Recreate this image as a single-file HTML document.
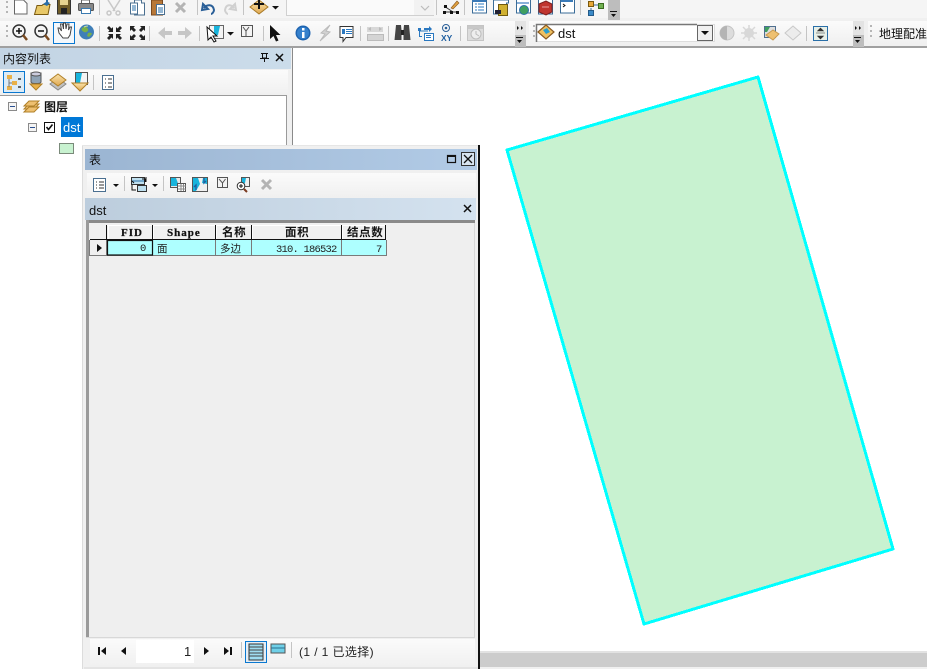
<!DOCTYPE html>
<html><head><meta charset="utf-8"><style>
html,body{margin:0;padding:0;background:#f0f0f0;width:927px;height:669px;overflow:hidden}
svg{display:block}
text{font-family:"Liberation Sans","Noto Sans CJK SC",sans-serif}
.m{font-family:"Liberation Serif","Noto Serif CJK SC",serif;font-size:11px;font-weight:bold;fill:#111;stroke:#111;stroke-width:.25;letter-spacing:1px}
.z{font-family:"Noto Sans CJK SC",sans-serif;font-size:11.500px;font-weight:bold;fill:#111;letter-spacing:.6px}
.c{font-family:"Liberation Mono","Noto Sans CJK SC",monospace;font-size:10.500px;fill:#222}
</style></head><body>
<svg width="927" height="669" viewBox="0 0 927 669" xmlns="http://www.w3.org/2000/svg">
<defs>
<linearGradient id="cap1" x1="0" x2="1"><stop offset="0" stop-color="#c3d4e4"/><stop offset="1" stop-color="#cbdcea"/></linearGradient>
<linearGradient id="cap2" x1="0" x2="1"><stop offset="0" stop-color="#9bb5d2"/><stop offset="1" stop-color="#b2cbe6"/></linearGradient>
<linearGradient id="cap3" x1="0" x2="1"><stop offset="0" stop-color="#bccddd"/><stop offset="1" stop-color="#d4e2ef"/></linearGradient>
<linearGradient id="tb" x1="0" x2="0" y1="0" y2="1"><stop offset="0" stop-color="#fbfbfb"/><stop offset="1" stop-color="#f0f0f0"/></linearGradient>
<linearGradient id="dia" x1="0" x2="0" y1="0" y2="1"><stop offset="0" stop-color="#fae3ab"/><stop offset="1" stop-color="#dfa850"/></linearGradient>
</defs>
<rect width="927" height="669" fill="#f0f0f0"/>
<!-- toolbar bands -->
<rect x="0" y="0" width="927" height="18" fill="#f5f5f5"/>
<rect x="0" y="21" width="515" height="23" fill="url(#tb)"/>
<rect x="529" y="21" width="330" height="23" fill="url(#tb)"/>
<rect x="868" y="21" width="59" height="23" fill="url(#tb)"/>
<rect x="0" y="46" width="927" height="2" fill="#a0a0a0"/>
<!-- grips -->
<g fill="#b5b5b5">
<rect x="6" y="1" width="2" height="2"/><rect x="6" y="6" width="2" height="2"/><rect x="6" y="11" width="2" height="2"/>
<rect x="6" y="25" width="2" height="2"/><rect x="6" y="30" width="2" height="2"/><rect x="6" y="35" width="2" height="2"/>
<rect x="533" y="25" width="2" height="2"/><rect x="533" y="30" width="2" height="2"/><rect x="533" y="35" width="2" height="2"/>
<rect x="870" y="25" width="2" height="2"/><rect x="870" y="30" width="2" height="2"/><rect x="870" y="35" width="2" height="2"/>
</g>
<!-- overflow chevrons -->
<g>
<rect x="608" y="0" width="12" height="20" fill="#bdbdbd"/><path d="M610 11h7v1h-7zM611 14h5l-2.500 3z" fill="#111"/>
<rect x="515" y="21" width="11" height="26" fill="#e3e3e3"/><rect x="515" y="35" width="11" height="12" fill="#bdbdbd"/><path d="M517 26l2 2-2 2zM521 26l2 2-2 2zM516 37h7v1h-7zM517 40h5l-2.500 3z" fill="#111"/>
<rect x="853" y="21" width="11" height="26" fill="#e3e3e3"/><rect x="853" y="35" width="11" height="12" fill="#bdbdbd"/><path d="M855 26l2 2-2 2zM859 26l2 2-2 2zM854 37h7v1h-7zM855 40h5l-2.500 3z" fill="#111"/>
</g>
<!-- separators -->
<g fill="#c4c4c4">
<rect x="99" y="0" width="1" height="15"/><rect x="197" y="0" width="1" height="15"/><rect x="243" y="0" width="1" height="15"/><rect x="436" y="0" width="1" height="15"/><rect x="464" y="0" width="1" height="15"/><rect x="580" y="0" width="1" height="15"/>
<rect x="99" y="26" width="1" height="15"/><rect x="149" y="26" width="1" height="15"/><rect x="199" y="26" width="1" height="15"/><rect x="263" y="26" width="1" height="15"/><rect x="360" y="26" width="1" height="15"/><rect x="388" y="26" width="1" height="15"/><rect x="460" y="26" width="1" height="15"/><rect x="806" y="26" width="1" height="15"/>
</g>
<!-- row 1 icons -->
<path d="M14.500 0h9l3.500 3.500V14H14.500z" fill="#fff" stroke="#666"/>
<path d="M34.500 14.500l2.500-9h5l1-1h7l-2 10z" fill="#e8c868" stroke="#7a5a10"/><path d="M43 4l3-2v-2h2v2l2 1-3 3z" fill="#2a6fa8"/>
<rect x="57.500" y="-1" width="13" height="15" fill="#6f5c28" stroke="#333"/><rect x="60" y="0" width="8" height="5" fill="#e6d390"/><rect x="61" y="8" width="6" height="6" fill="#222"/>
<path d="M81.500 0h8v4h-8z" fill="#fff" stroke="#666"/><rect x="78.500" y="3.500" width="15" height="7" rx="1" fill="#888" stroke="#555"/><rect x="81.500" y="8.500" width="9" height="5" fill="#fff" stroke="#3a7ab0"/>
<g stroke="#c8c8c8" stroke-width="1.500" fill="none"><path d="M108 0l7 11M120 0l-7 11"/><circle cx="109" cy="13" r="2"/><circle cx="118" cy="13" r="2"/></g>
<path d="M134.500 0h7v3h3v12h-10z" fill="#fff" stroke="#4a6f90"/><path d="M130.500 3h7v11h-7z" fill="#fff" stroke="#4a6f90"/><path d="M132 6h4M132 8h4M132 10h4" stroke="#2a6fa8"/>
<rect x="151.500" y="0" width="11" height="15" fill="#b87838" stroke="#7a4a20"/><path d="M156.500 4.500h8v10h-8z" fill="#fff" stroke="#4a6f90"/><path d="M158 8h5M158 10h5M158 12h5" stroke="#2a6fa8"/>
<path d="M176 3l9 9M185 3l-9 9" stroke="#b4b4b4" stroke-width="3"/>
<path d="M203 4l-1 6 6-1zM204 8c3-4 9-4 10 2 0 2-2 4-3 4" fill="none" stroke="#2a5f98" stroke-width="2"/>
<path d="M235 4l1 6-6-1zM234 8c-3-4-8-4-9 2 0 2 2 4 3 4" fill="none" stroke="#d0d0d0" stroke-width="2"/>
<path d="M250 7l9-7 9 7-9 7z" fill="url(#dia)" stroke="#a87a28"/><path d="M259 0v9M254 4h10" stroke="#111" stroke-width="2"/>
<path d="M272 6h7l-3.500 3.500z" fill="#111"/>
<path d="M286.500 0v15.500H434" fill="none" stroke="#d0d0d0"/><rect x="287" y="0" width="127" height="15" fill="#fafafa"/><rect x="414" y="0" width="20" height="15" fill="#f2f2f2"/><path d="M421 6l4 4 4-4" fill="none" stroke="#bdbdbd" stroke-width="1.200"/>
<path d="M444 12h14M444 6l9 6" stroke="#333" fill="none"/><path d="M444 5h3v3h-3zM443 11h3v3h-3zM450 11h3v3h-3zM456 11h3v3h-3z" fill="#111"/><path d="M451 8l6-7 2 2-6 6z" fill="#e0a040" stroke="#8a5a20" stroke-width=".6"/>
<rect x="472.500" y="-1" width="14" height="14" fill="#fff" stroke="#3a6c98"/><rect x="472" y="0" width="14" height="2" fill="#3a7ab8"/><path d="M475 4h2M478 4h6M475 7h2M478 7h6M475 10h2M478 10h6" stroke="#2a78c0"/>
<path d="M493.500 0h15v3h-2v11h-13z" fill="#fff" stroke="#3a6c98"/><path d="M498.500 4.500h9v11h-9z" fill="#d0b030" stroke="#6f5a10"/><rect x="495" y="10" width="6" height="4" fill="#223"/>
<rect x="516.500" y="-1" width="14" height="14" fill="#fff" stroke="#3a6c98"/><rect x="517" y="2" width="12" height="2" fill="#8ab0d8"/><circle cx="524" cy="10" r="4.500" fill="#3f9f60" stroke="#2a6fa8"/>
<rect x="538.500" y="-1" width="14" height="15" fill="#fff" stroke="#3a6c98"/><path d="M539 4l7-3 6 3v8l-6 3-7-3z" fill="#c0352f" stroke="#7a1f1f"/><path d="M542 7h7" stroke="#e8a0a0"/>
<rect x="560.500" y="-1" width="14" height="14" fill="#fff" stroke="#3a6c98"/><rect x="561" y="0" width="12" height="2" fill="#3a7ab8"/><path d="M563 4l2 1.500-2 1.500" stroke="#111" fill="none"/>
<path d="M593 5h6" stroke="#3a6c98"/><path d="M591 8v3" stroke="#3a6c98"/><rect x="588.500" y="1.500" width="5" height="5" fill="#e8a838" stroke="#7a5a10"/><rect x="588.500" y="10.500" width="5" height="5" fill="#3a8ac8" stroke="#245a88"/><rect x="598.500" y="3.500" width="5" height="5" fill="#70b050" stroke="#3a6a20"/>
<!-- row 2 icons -->
<g>
<circle cx="19" cy="31" r="6" fill="#f4f4f4" stroke="#333" stroke-width="1.500"/><path d="M16 31h6M19 28v6" stroke="#111" stroke-width="1.500"/><path d="M23 35l4 5" stroke="#7a4a20" stroke-width="2.500"/>
<circle cx="41" cy="31" r="6" fill="#f4f4f4" stroke="#333" stroke-width="1.500"/><path d="M38 31h6" stroke="#111" stroke-width="1.500"/><path d="M45 35l4 5" stroke="#7a4a20" stroke-width="2.500"/>
<rect x="53.500" y="22.500" width="21" height="21" fill="#f4f8fc" stroke="#0a78d0"/>
<path d="M59 33l-1-5 1.500 0 2 3-1-7h2l1 5 0-6h2l.5 6 1-5h2l-.5 6 1.500-3h1.500l-1.500 8-2 3h-5z" fill="#fff" stroke="#444"/>
<circle cx="86.500" cy="32" r="7.500" fill="#3f7fb8"/><path d="M82 28c3-2 5-1 6 1s-2 4-4 3-3-2-2-4zM88 33c2-1 4 0 4 1l-3 3-2-1z" fill="#78b048"/><path d="M84 27c2-1 3-1 4-1" stroke="#cfe0a0"/>
<g fill="#222">
<path d="M113 32h-5l1.500-1.500-2.500-2.500 2-2 2.500 2.500L113 27zM116 32v-5l1.500 1.500 2.500-2.500 2 2-2.500 2.500L121 32zM113 34v5l-1.500-1.500L109 40l-2-2 2.500-2.500L108 34zM116 34h5l-1.500 1.500L122 38l-2 2-2.500-2.500L116 39z"/>
<path d="M130 26h5l-1.500 1.500 2.500 2.500-2 2-2.500-2.500L130 31zM145 26v5l-1.500-1.500L141 32l-2-2 2.500-2.500L140 26zM130 40v-5l1.500 1.500L134 34l2 2-2.500 2.500L135 40zM145 40h-5l1.500-1.500L139 36l2-2 2.500 2.500L145 35z"/>
</g>
<path d="M158 33l7-6v4h7v4h-7v4zM192 33l-7-6v4h-7v4h7v4z" fill="#c6c6c6"/>
<rect x="209.500" y="25.500" width="14" height="13" fill="#f4f4f4" stroke="#666"/><path d="M214 26l6 0-2 9-4 1z" fill="#18b4dc"/><path d="M207 27l10 9-4 0 3 5-2 1-3-5-3 3z" fill="#fff" stroke="#111"/>
<path d="M227 32h7l-3.500 3.500z" fill="#111"/>
<rect x="241.500" y="25.500" width="11" height="11" fill="#f4f4f4" stroke="#555"/><path d="M243 27l3 4 3-4M246 31v5" stroke="#555" fill="none"/>
<path d="M270 25l0 14 3.500-3 2.500 5.500 2.500-1-2.500-5.500h4.500z" fill="#111"/>
<circle cx="303" cy="33" r="7.500" fill="#1f64b0"/><circle cx="303" cy="33" r="6" fill="#3580cc"/><rect x="302" y="32" width="2.500" height="6" fill="#fff"/><rect x="302" y="28" width="2.500" height="2.500" fill="#fff"/>
<path d="M330 25l-9 8 4 1-5 7 10-9-4-1z" fill="#d2d2d2" stroke="#bbb"/>
<path d="M340 26.500h13v11h-7l-3 4v-4h-3z" fill="#fff" stroke="#333"/><rect x="342" y="29" width="3" height="5" fill="#2a78c0"/><path d="M346 29.500h6M346 31.500h6M346 33.500h6" stroke="#2a78c0"/>
<path d="M367 27h16v5h-16z" fill="#d8d8d8"/><path d="M368 29l3-2v4zM382 29l-3-2v4z" fill="#bbb"/><rect x="367.500" y="34.500" width="16" height="6" fill="#d4d4d4" stroke="#bbb"/>
<path d="M396 25h5l.5 5v10h-7zM404 25h5l1.500 15h-7v-10z" fill="#444"/><rect x="401" y="30" width="3" height="5" fill="#222"/>
<g fill="none" stroke="#2a78c0"><path d="M419.500 30v7M419 31h9M419 36.500h3"/></g><rect x="424.500" y="33.500" width="9" height="7" fill="#fff" stroke="#2a78c0"/><path d="M426 35.500h5M426 37.500h5" stroke="#2a78c0"/><path d="M424 28h5l0-2 3 3-3 3 0-2h-5z" fill="#2a78c0"/><rect x="418" y="28" width="3" height="3" fill="#2a78c0"/>
<circle cx="446" cy="28" r="3.500" fill="none" stroke="#2a5f98"/><circle cx="446" cy="28" r="1.300" fill="#2a5f98"/>
<text x="441" y="41" font-size="8.500" font-weight="bold" fill="#1f5fa0">XY</text>
<rect x="467.500" y="25.500" width="16" height="15" fill="#dcdcdc" stroke="#c4c4c4"/><rect x="468" y="26" width="15" height="3" fill="#c8c8c8"/><circle cx="476" cy="34" r="5" fill="#eee" stroke="#bdbdbd"/><path d="M476 31v3l3 2" stroke="#bbb" fill="none"/>
</g>
<!-- layer dropdown -->
<rect x="536.500" y="24.500" width="178" height="17" fill="#fff" stroke="#ddd"/><path d="M536.500 42v-17.500H697" fill="none" stroke="#777" stroke-width="1.500"/>
<path d="M538 32l8-7 8 7-8 7z" fill="#f0c060" stroke="#8a5a20" stroke-width="1.200"/><path d="M543 30l4-2 3 4-4 2z" fill="#2a9fd0"/>
<text x="558" y="38" font-size="13" fill="#111">dst</text>
<rect x="697.500" y="25.500" width="15" height="15" fill="#f0f0f0" stroke="#666"/><path d="M701 31h8l-4 4z" fill="#111"/>
<!-- georef icons -->
<circle cx="727" cy="33" r="7" fill="#dcdcdc" stroke="#c4c4c4"/><path d="M727 26a7 7 0 0 0 0 14z" fill="#b4b4b4"/>
<circle cx="749" cy="33" r="5" fill="#d8d8d8"/><path d="M749 25v16M741 33h16M743 27l12 12M755 27l-12 12" stroke="#d8d8d8" stroke-width="1.500"/>
<rect x="764.500" y="26.500" width="11" height="11" fill="#ddd" stroke="#4f6f8f"/><path d="M765 27h5l-3 5h-2z" fill="#3f9f60"/><path d="M766 35l7-5 6 4-6 6z" fill="#eec070" stroke="#c89a50"/>
<path d="M785 33l8-7 8 7-8 7z" fill="#ececec" stroke="#c8c8c8"/>
<rect x="813.500" y="26.500" width="14" height="14" fill="#e8f0e8" stroke="#2a6fa8"/><path d="M816 33h9M820.500 28l-3 3h6zM820.500 39l-3-3h6z" fill="#333" stroke="#333" stroke-width=".6"/>
<text x="879" y="38" font-size="12" fill="#111">地理配准</text>
<!-- TOC panel -->
<rect x="0" y="48" width="291" height="21" fill="url(#cap1)"/>
<text x="3" y="63" font-size="12" fill="#111">内容列表</text>
<path d="M261 53.500h7M262.500 53v5h4v-5M264.500 58v4M260 58.500h9" stroke="#111" fill="none"/>
<path d="M276 54l7 7M283 54l-7 7" stroke="#111" stroke-width="1.500"/>
<rect x="0" y="70" width="288" height="25" fill="url(#tb)"/>
<rect x="3.500" y="71.500" width="21" height="21" fill="#dcebf6" stroke="#0a78d0"/>
<rect x="7" y="75" width="5" height="4" fill="#e8b048"/><rect x="12" y="81" width="5" height="4" fill="#e8b048"/><rect x="7" y="86" width="5" height="4" fill="#e8b048"/><path d="M18 79h3M18 87h3" stroke="#333" stroke-width="1.500"/><path d="M9 79v8M9 83h3" stroke="#777"/>
<path d="M31 73h10v9c0 2-10 2-10 0z" fill="#8fa3b5" stroke="#555"/><ellipse cx="36" cy="74" rx="5" ry="2" fill="#ccd" stroke="#555"/><path d="M30 84h12l-6 6z" fill="#e8b048" stroke="#b08028"/>
<path d="M50 84l8-6 8 6-8 6z" fill="#c0c0c0" stroke="#888"/><path d="M50 80l8-6 8 6-8 6z" fill="url(#dia)" stroke="#b08028"/>
<rect x="75.500" y="72.500" width="12" height="12" fill="#f4f4f4" stroke="#555"/><path d="M76 73h6l-2 10h-4z" fill="#18b4dc"/><path d="M72 83l8 8 8-8z" fill="url(#dia)" stroke="#b08028"/>
<rect x="93" y="75" width="1" height="15" fill="#c4c4c4"/>
<rect x="102.500" y="75.500" width="11" height="14" fill="#fff" stroke="#4a6f90"/><path d="M105 79h1M108 79h4M105 83h1M108 83h4M105 87h1M108 87h4" stroke="#333"/>
<!-- tree box -->
<rect x="0" y="95" width="287" height="574" fill="#fff"/>
<path d="M0 95.500h286.500V669" fill="none" stroke="#9a9a9a"/>
<rect x="8.500" y="102.500" width="8" height="8" fill="#f4f4f4" stroke="#8a8a8a"/><path d="M10 106.500h5" stroke="#2a4f90"/>
<path d="M24 109l5-5h10l-5 5z" fill="#eec070" stroke="#b08028"/><path d="M24 106l5-5h10l-5 5z" fill="#eec070" stroke="#b08028"/><path d="M24 112l5-5h10l-5 5z" fill="#eec070" stroke="#b08028"/>
<text x="44" y="111" font-size="12" font-weight="bold" fill="#111">图层</text>
<rect x="28.500" y="123.500" width="8" height="8" fill="#f4f4f4" stroke="#8a8a8a"/><path d="M30 127.500h5" stroke="#2a4f90"/>
<rect x="44.500" y="122.500" width="10" height="10" fill="#fff" stroke="#111"/><path d="M46.500 127l2 2.500 4-5" fill="none" stroke="#111" stroke-width="1.600"/>
<rect x="61" y="117" width="22" height="20" fill="#0078d7"/>
<text x="63" y="132" font-size="13" fill="#fff">dst</text>
<rect x="59.500" y="143.500" width="14" height="10" fill="#c8f2d0" stroke="#7a8a7a"/>
<!-- map -->
<rect x="293" y="48" width="634" height="605" fill="#fff"/>
<rect x="292" y="48" width="1" height="621" fill="#8a8a8a"/>
<polygon points="507,150 758,77 893,549 644,624" fill="#c8f2d0" stroke="#00ffff" stroke-width="3" stroke-linejoin="round" shape-rendering="crispEdges"/>
<rect x="480" y="651" width="447" height="2" fill="#e2e2e2"/>
<rect x="480" y="653" width="447" height="14" fill="#cccccc"/>
<rect x="480" y="667" width="447" height="2" fill="#f0f0f0"/>
<!-- table window -->
<rect x="82" y="145" width="398" height="524" fill="#f0f0f0"/>
<rect x="82" y="145" width="1" height="524" fill="#dcdcdc"/>
<rect x="82" y="145" width="396" height="1" fill="#e6e6e6"/>
<rect x="85" y="149" width="392" height="21" fill="url(#cap2)"/>
<rect x="478" y="145" width="2" height="524" fill="#111"/>
<text x="89" y="164" font-size="12" fill="#111">表</text>
<rect x="447.500" y="155.500" width="8" height="7" fill="none" stroke="#111" stroke-width="1.200"/><rect x="447" y="155" width="9" height="2" fill="#111"/>
<rect x="461.500" y="152.500" width="13" height="13" fill="#d8e4f0" stroke="#333"/><path d="M464 155l8 8M472 155l-8 8" stroke="#111" stroke-width="1.300"/>
<rect x="87" y="173" width="389" height="24" fill="url(#tb)"/>
<rect x="93.500" y="178.500" width="12" height="13" fill="#fff" stroke="#4a6f90"/><path d="M96 182h1M99 182h5M96 185h1M99 185h5M96 188h1M99 188h5" stroke="#333"/>
<path d="M113 184h6l-3 3z" fill="#111"/>
<rect x="124" y="176" width="1" height="15" fill="#c4c4c4"/>
<rect x="131.500" y="177.500" width="13" height="7" fill="#bfe0f0" stroke="#333"/><path d="M132 181h12" stroke="#2a6fa8"/><rect x="137.500" y="185.500" width="9" height="6" fill="#bfe0f0" stroke="#333"/><path d="M132 185v5h4M146 177v5" stroke="#111" fill="none"/><path d="M134 183l-2-2M142 179h3l0 3" stroke="#111" fill="none"/>
<path d="M152 184h6l-3 3z" fill="#111"/>
<rect x="163" y="176" width="1" height="15" fill="#c4c4c4"/>
<rect x="170.500" y="177.500" width="10" height="10" fill="#e8e8e8" stroke="#555"/><path d="M171 178h5l3 8h-8z" fill="#18b4dc"/><rect x="177.500" y="183.500" width="8" height="8" fill="#fff" stroke="#555"/><path d="M178 186h8M178 189h8M181 184v7M183.500 184v7" stroke="#888"/>
<rect x="192.500" y="177.500" width="15" height="14" fill="#f0f0f0" stroke="#555"/><path d="M193 178h5l2 6-4 7h-3zM203 178h4v6l-5-1z" fill="#18b4dc"/><path d="M196 190v-5l-2 2M204 178v5l2-2" stroke="#1f5fa0" fill="none" stroke-width="1.300"/>
<rect x="217.500" y="177.500" width="10" height="10" fill="#f4f4f4" stroke="#555"/><path d="M219 179l3.500 4 3-4M222.500 183v4" stroke="#555" fill="none"/>
<rect x="241.500" y="177.500" width="8" height="9" fill="#f0f0f0" stroke="#555"/><path d="M242 178h4l-1 5-3 3z" fill="#18b4dc"/><circle cx="241" cy="186" r="3.800" fill="#fff" stroke="#333"/><path d="M239 186h4M241 184v4" stroke="#111"/><path d="M244 189l3 3" stroke="#7a3a20" stroke-width="2"/>
<path d="M262 180l9 9M271 180l-9 9" stroke="#b4b4b4" stroke-width="3"/>
<!-- tab -->
<rect x="85" y="198" width="391" height="22" fill="url(#cap3)"/>
<text x="89" y="215" font-size="13" fill="#111">dst</text>
<path d="M464 205l7 7M471 205l-7 7" stroke="#111" stroke-width="1.500"/>
<!-- table client -->
<rect x="86" y="220" width="389" height="417" fill="#efefef"/>
<rect x="86" y="220" width="389" height="3" fill="#8a8a8a"/>
<rect x="86" y="220" width="3" height="417" fill="#9a9a9a"/>
<rect x="474" y="223" width="1" height="414" fill="#d8d8d8"/>
<rect x="86" y="637" width="389" height="1" fill="#d8d8d8"/>
<!-- grid -->
<rect x="90" y="225" width="297" height="15" fill="#f0f0f0"/>
<rect x="90" y="240" width="17" height="15" fill="#f0f0f0"/>
<rect x="107" y="240" width="280" height="15" fill="#aeffff"/>
<g fill="#fff"><rect x="107" y="225" width="279" height="1"/><rect x="108" y="225" width="1" height="14"/><rect x="153" y="225" width="1" height="14"/><rect x="216" y="225" width="1" height="14"/><rect x="252" y="225" width="1" height="14"/><rect x="342" y="225" width="1" height="14"/></g>
<g fill="#111"><rect x="90" y="239" width="296" height="1"/><rect x="106" y="225" width="1" height="15"/><rect x="152" y="225" width="1" height="15"/><rect x="215" y="225" width="1" height="15"/><rect x="251" y="225" width="1" height="15"/><rect x="341" y="225" width="1" height="15"/><rect x="385" y="225" width="1" height="15"/></g>
<g fill="#7a7a7a"><rect x="90" y="255" width="297" height="1"/><rect x="89" y="240" width="1" height="16"/><rect x="215" y="240" width="1" height="15"/><rect x="251" y="240" width="1" height="15"/><rect x="341" y="240" width="1" height="15"/><rect x="386" y="240" width="1" height="16"/><rect x="106" y="240" width="1" height="15"/></g>
<rect x="107.500" y="240.500" width="45" height="14.500" fill="none" stroke="#111" stroke-width="1.200"/>
<path d="M97 244l5 4-5 4z" fill="#111"/>
<text class="m" x="121" y="236">FID</text>
<text class="m" x="167" y="236">Shape</text>
<text class="z" x="222" y="236">名称</text>
<text class="z" x="285" y="236">面积</text>
<text class="z" x="347" y="236">结点数</text>
<text class="c" x="140" y="251">0</text>
<text class="c" x="157" y="252" font-size="11">面</text>
<text class="c" x="220" y="252" font-size="11">多边</text>
<text class="c" x="276" y="252" letter-spacing="-.8">310. 186532</text>
<text class="c" x="376" y="252">7</text>
<!-- footer -->
<rect x="90" y="639" width="385" height="28" fill="url(#tb)"/>
<rect x="84" y="667" width="394" height="2" fill="#e4e4e4"/>
<path d="M98 647h2v8h-2zM101 651l5-4v8zM121 651l5-4v8z" fill="#111"/>
<rect x="136" y="640" width="58" height="23" fill="#fff"/>
<text x="184" y="656" font-size="13" fill="#222">1</text>
<path d="M204 647l5 4-5 4zM224 647l5 4-5 4zM230 647h2v8h-2z" fill="#111"/>
<rect x="241" y="642" width="1" height="16" fill="#c4c4c4"/>
<rect x="245.500" y="641.500" width="21" height="21" fill="#e4eef6" stroke="#0a78d0"/>
<rect x="249" y="644" width="14" height="16" fill="#9fdcf0" stroke="#333"/><path d="M249 647h14M249 650h14M249 653h14M249 656h14" stroke="#444"/>
<rect x="271" y="644" width="14" height="9" fill="#6fd0e8" stroke="#555"/><path d="M271 648h14" stroke="#2a6f8f"/>
<rect x="291" y="642" width="1" height="16" fill="#c4c4c4"/>
<text x="299" y="656" font-size="12" fill="#222" letter-spacing=".4">(1 / 1 已选择)</text>
</svg>
</body></html>
